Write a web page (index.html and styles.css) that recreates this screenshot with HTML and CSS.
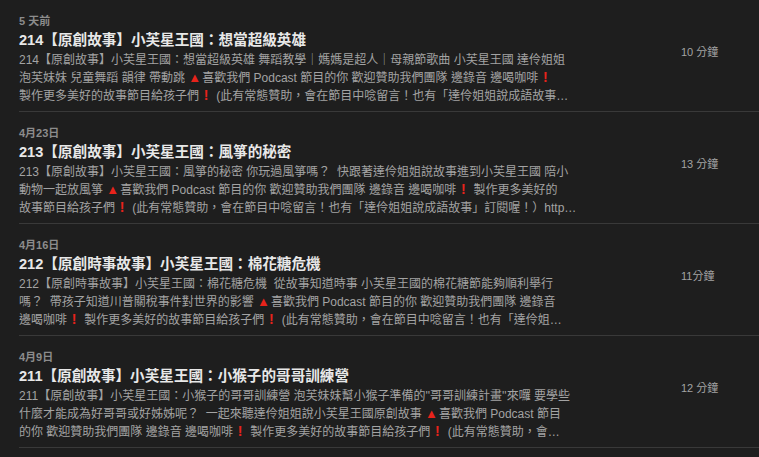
FILE: index.html
```html
<!DOCTYPE html>
<html lang="zh-Hant">
<head>
<meta charset="utf-8">
<link rel="stylesheet" href="styles.css">
</head>
<body>
<div class="list">
  <div class="row">
    <div class="content">
      <div class="date">5 天前</div>
      <div class="title">214【原創故事】小芙星王國：想當超級英雄</div>
      <div class="desc">
        <div class="line">214【原創故事】小芙星王國：想當超級英雄 舞蹈教學｜媽媽是超人｜母親節歌曲 小芙星王國 達伶姐姐</div>
        <div class="line">泡芙妹妹 兒童舞蹈 韻律 帶動跳 <span class="tri">▲</span>喜歡我們 Podcast 節目的你 歡迎贊助我們團隊 邊錄音 邊喝咖啡<span class="ex">!</span></div>
        <div class="line">製作更多美好的故事節目給孩子們<span class="ex">!</span> (此有常態贊助，會在節目中唸留言！也有「達伶姐姐說成語故事…</div>
      </div>
    </div>
    <div class="dur">10 分鐘</div>
  </div>
  <div class="row">
    <div class="content">
      <div class="date">4月23日</div>
      <div class="title">213【原創故事】小芙星王國：風箏的秘密</div>
      <div class="desc">
        <div class="line">213【原創故事】小芙星王國：風箏的秘密 你玩過風箏嗎？  快跟著達伶姐姐說故事進到小芙星王國 陪小</div>
        <div class="line">動物一起放風箏 <span class="tri">▲</span>喜歡我們 Podcast 節目的你 歡迎贊助我們團隊 邊錄音 邊喝咖啡<span class="ex">!</span> 製作更多美好的</div>
        <div class="line">故事節目給孩子們<span class="ex">!</span> (此有常態贊助，會在節目中唸留言！也有「達伶姐姐說成語故事」訂閱喔！）http…</div>
      </div>
    </div>
    <div class="dur">13 分鐘</div>
  </div>
  <div class="row">
    <div class="content">
      <div class="date">4月16日</div>
      <div class="title">212【原創時事故事】小芙星王國：棉花糖危機</div>
      <div class="desc">
        <div class="line">212【原創時事故事】小芙星王國：棉花糖危機  從故事知道時事 小芙星王國的棉花糖節能夠順利舉行</div>
        <div class="line">嗎？  帶孩子知道川普關稅事件對世界的影響 <span class="tri">▲</span>喜歡我們 Podcast 節目的你 歡迎贊助我們團隊 邊錄音</div>
        <div class="line">邊喝咖啡<span class="ex">!</span> 製作更多美好的故事節目給孩子們<span class="ex">!</span> (此有常態贊助，會在節目中唸留言！也有「達伶姐…</div>
      </div>
    </div>
    <div class="dur">11分鐘</div>
  </div>
  <div class="row">
    <div class="content">
      <div class="date">4月9日</div>
      <div class="title">211【原創故事】小芙星王國：小猴子的哥哥訓練營</div>
      <div class="desc">
        <div class="line">211【原創故事】小芙星王國：小猴子的哥哥訓練營 泡芙妹妹幫小猴子準備的''哥哥訓練計畫''來囉 要學些</div>
        <div class="line">什麼才能成為好哥哥或好姊姊呢？  一起來聽達伶姐姐說小芙星王國原創故事 <span class="tri">▲</span>喜歡我們 Podcast 節目</div>
        <div class="line">的你 歡迎贊助我們團隊 邊錄音 邊喝咖啡<span class="ex">!</span> 製作更多美好的故事節目給孩子們<span class="ex">!</span> (此有常態贊助，會…</div>
      </div>
    </div>
    <div class="dur">12 分鐘</div>
  </div>
</div>
</body>
</html>
```
FILE: styles.css
```css
html, body {
  margin: 0;
  padding: 0;
  background: #1e1e1e;
  width: 759px;
  height: 457px;
  overflow: hidden;
  font-family: "Liberation Sans", "Noto Sans CJK TC", sans-serif;
}
.list {
  display: flex;
  flex-direction: column;
}
.row {
  display: flex;
  margin-left: 19px;
  padding: 14px 0 6px 0;
  border-bottom: 1px solid #393939;
}
.content {
  width: 662px;
  flex: none;
}
.date {
  font-size: 11px;
  line-height: 14px;
  font-weight: bold;
  color: #8c8c8c;
}
.title {
  margin-top: 1px;
  font-size: 14.6px;
  line-height: 22px;
  font-weight: bold;
  color: #e8e8e8;
  white-space: nowrap;
}
.desc {
  font-size: 12px;
  line-height: 18px;
  color: #a3a3a3;
}
.line {
  white-space: pre;
  overflow: hidden;
  width: 560px;
}
.tri {
  color: #e8231b;
  font-size: 13px;
  margin-right: 1px;
}
.ex {
  display: inline-block;
  width: 14px;
  text-align: center;
  color: #e8231b;
  font-weight: 900;
  font-size: 14px;
  line-height: 12px;
}
.dur {
  margin-top: 31px;
  font-size: 11px;
  line-height: 14px;
  color: #a3a3a3;
  white-space: nowrap;
}
```
